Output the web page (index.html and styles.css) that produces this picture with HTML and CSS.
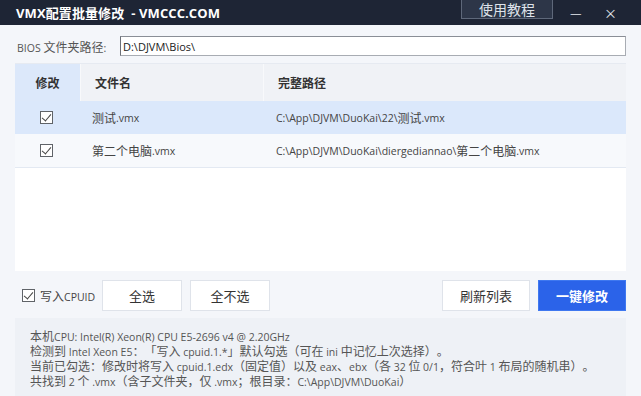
FILE: index.html
```html
<!DOCTYPE html>
<html lang="zh">
<head>
<meta charset="utf-8">
<title>VMX配置批量修改</title>
<link rel="stylesheet" href="styles.css">
</head>
<body>
<div class="window">
  <header class="titlebar">
    <div class="title">VMX配置批量修改&nbsp; - VMCCC.COM</div>
    <button class="help-btn">使用教程</button>
    <span class="win-min">—</span>
    <span class="win-close">×</span>
  </header>
  <main class="main">
    <div class="bios-row">
      <label class="bios-label"><span class="en">BIOS </span>文件夹路径<span class="en">:</span></label>
      <div class="bios-input"><span class="en">D:\DJVM\Bios\</span></div>
    </div>
    <section class="table">
      <div class="thead">
        <div class="th th-check">修改</div>
        <div class="th">文件名</div>
        <div class="th">完整路径</div>
      </div>
      <div class="tr selected">
        <div class="td td-check"><span class="cb"></span></div>
        <div class="td">测试<span class="en">.vmx</span></div>
        <div class="td"><span class="en">C:\App\DJVM\DuoKai\22\</span>测试<span class="en">.vmx</span></div>
      </div>
      <div class="tr alt">
        <div class="td td-check"><span class="cb"></span></div>
        <div class="td">第二个电脑<span class="en">.vmx</span></div>
        <div class="td"><span class="en">C:\App\DJVM\DuoKai\diergediannao\</span>第二个电脑<span class="en">.vmx</span></div>
      </div>
      <div class="table-empty"></div>
    </section>
    <div class="controls">
      <label class="cpuid"><span class="cb"></span><span>写入<span class="en">CPUID</span></span></label>
      <button class="btn">全选</button>
      <button class="btn">全不选</button>
      <div class="spacer"></div>
      <button class="btn btn-refresh">刷新列表</button>
      <button class="btn btn-primary">一键修改</button>
    </div>
    <section class="info">
      <p>本机<span class="en">CPU: Intel(R) Xeon(R) CPU E5-2696 v4 @ 2.20GHz</span></p>
      <p>检测到<span class="en"> Intel Xeon E5</span>：「写入<span class="en"> cpuid.1.*</span>」默认勾选（可在<span class="en"> ini </span>中记忆上次选择）。</p>
      <p>当前已勾选：修改时将写入<span class="en"> cpuid.1.edx</span>（固定值）以及<span class="en"> eax</span>、<span class="en">ebx</span>（各<span class="en"> 32 </span>位<span class="en"> 0/1</span>，符合叶<span class="en"> 1 </span>布局的随机串）。</p>
      <p>共找到<span class="en"> 2 </span>个<span class="en"> .vmx</span>（含子文件夹，仅<span class="en"> .vmx</span>；根目录：<span class="en">C:\App\DJVM\DuoKai</span>）</p>
    </section>
  </main>
</div>
</body>
</html>
```
FILE: styles.css
```css
* { box-sizing: border-box; }
html, body {
  margin: 0;
  padding: 0;
  width: 641px;
  height: 396px;
  overflow: hidden;
  background: #f4f6fa;
  font-family: "Noto Sans CJK SC", sans-serif;
  font-size: 12px;
  color: #444;
  text-spacing-trim: space-all;
}
.en {
  font-family: "Open Sans", "Noto Sans", sans-serif;
  font-size: 10.5px;
}
.window { width: 641px; height: 396px; overflow: hidden; }

.titlebar {
  height: 25px;
  background: #1e2535;
  display: flex;
  align-items: center;
  padding-left: 16px;
  color: #fff;
}
.title {
  font-family: "Open Sans", "Noto Sans CJK SC", sans-serif;
  font-weight: bold;
  font-size: 13px;
  letter-spacing: 0.1px;
  flex: 1;
}
.help-btn {
  align-self: flex-start;
  width: 92px;
  height: 20px;
  margin-top: -1px;
  background: #2d3648;
  border: 1px solid #5e687a;
  color: #dfe3ea;
  font-family: "Noto Sans CJK SC", sans-serif;
  font-size: 14px;
  padding: 0;
  line-height: 16px;
}
.win-min {
  width: 16px;
  margin-left: 17px;
  color: #e6e9ef;
  font-size: 13px;
  line-height: 1;
}
.win-close {
  margin-left: 18px;
  margin-right: 24px;
  color: #e6e9ef;
  font-size: 13px;
  line-height: 1;
}

.main { padding: 0 15px; }

.bios-row {
  display: flex;
  align-items: center;
  height: 20px;
  margin-top: 11px;
}
.bios-label {
  width: 105px;
  padding-left: 2px;
  color: #555;
}
.bios-input {
  flex: 1;
  height: 20px;
  background: #fff;
  border: 1px solid #a8acb3;
  border-left-color: #6c7078;
  border-top-color: #8a8e96;
  padding-left: 2px;
  line-height: 18px;
  color: #222;
}
.bios-input .en { font-size: 11px; }

.table {
  margin-top: 7px;
  background: #fff;
  border-top: 1px solid #e6eaf1;
  height: 208px;
  display: flex;
  flex-direction: column;
}
.thead, .tr {
  display: grid;
  grid-template-columns: 65px 183px 1fr;
}
.thead { height: 37px; background: #f0f2f6; }
.th {
  display: flex;
  align-items: center;
  padding-left: 14px;
  font-weight: bold;
  font-size: 12px;
  color: #333;
  border-left: 1px solid #f8f9fb;
}
.th-check {
  justify-content: center;
  padding-left: 0;
  background: #dce8fa;
  border-left: none;
}
.tr { height: 33px; }
.tr.selected { background: #dbe8fb; }
.tr.alt { background: #f7f9fc; border-bottom: 1px solid #e3e9f2; height: 34px; }
.td {
  display: flex;
  align-items: center;
  padding-left: 12px;
  color: #444;
  white-space: nowrap;
}
.td + .td + .td { padding-left: 13px; }
.td-check { justify-content: center; padding-left: 0; padding-right: 2px; }
.table-empty { flex: 1; background: #fff; }

.cb {
  display: inline-block;
  width: 13px;
  height: 13px;
  border: 1px solid #5f6368;
  background: #fff;
  position: relative;
  flex: none;
}
.cb::after {
  content: "";
  position: absolute;
  left: 3px;
  top: 0px;
  width: 4px;
  height: 8px;
  border-right: 1.5px solid #444;
  border-bottom: 1.5px solid #444;
  transform: rotate(40deg);
}

.controls {
  display: flex;
  align-items: center;
  margin-top: 9px;
  height: 31px;
}
.cpuid {
  display: flex;
  align-items: center;
  gap: 5px;
  margin-left: 7px;
  width: 80px;
  color: #444;
}
.btn {
  height: 31px;
  width: 80px;
  margin-right: 8px;
  background: #fff;
  border: 1px solid #dfe3ea;
  font-family: "Noto Sans CJK SC", sans-serif;
  font-size: 13px;
  color: #333;
  padding: 0;
}
.spacer { flex: 1; }
.btn-refresh { width: 88px; margin-right: 8px; }
.btn-primary {
  width: 88px;
  margin-right: 0;
  background: #2b63e9;
  border-color: #3f78f0;
  color: #fff;
  font-weight: bold;
}

.info {
  margin-top: 7px;
  background: #eef1f6;
  height: 90px;
  padding: 11px 15px;
  color: #555;
}
.info p {
  margin: 0;
  line-height: 14px;
  white-space: nowrap;
}
```
